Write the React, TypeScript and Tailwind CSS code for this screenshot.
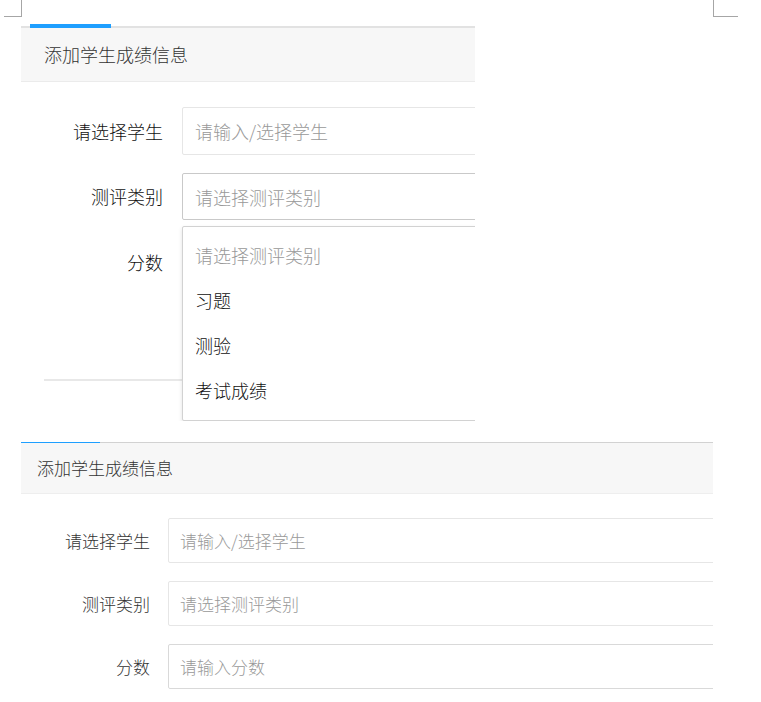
import React from "react";

const font = { fontFamily: '"Noto Sans CJK SC", "Noto Sans", sans-serif' };

const categories = ["习题", "测验", "考试成绩"];

function CornerMarks() {
  return (
    <div className="flex h-[17px]">
      <div className="ml-[4px] w-[18px] h-[17px] border-r border-b border-[#a6a6a6]" />
      <div className="ml-[691px] w-[25px] h-[17px] border-l border-b border-[#a6a6a6]" />
    </div>
  );
}

export default function App() {
  return (
    <div className="w-[761px] h-[702px] bg-white overflow-hidden font-light" style={font}>
      <CornerMarks />

      {/* first shot: select opened */}
      <div className="ml-[21px] mt-[7px] w-[454px] overflow-hidden">
        <div className="flex h-[4px]">
          <div className="w-[9px] border-b-2 border-[#e2e2e2]" />
          <div className="w-[81px] bg-[#1e9fff]" />
          <div className="flex-1 border-b-2 border-[#e2e2e2]" />
        </div>
        <div className="h-[54px] bg-[#f7f7f7] border-b border-[#ebebeb] flex items-center pl-[23px] text-[18px] text-[#333]">
          添加学生成绩信息
        </div>

        <div className="pt-[25px] flex flex-col gap-[18px]">
          <div className="flex items-center">
            <div className="w-[142px] shrink-0 text-right text-[18px] text-[#111]">请选择学生</div>
            <input
              readOnly
              placeholder="请输入/选择学生"
              className="ml-[19px] w-[320px] shrink-0 h-[48px] border border-[#e6e6e6] rounded-[2px] pl-[12px] text-[18px] outline-none placeholder:text-[#999]"
            />
          </div>
          <div className="flex items-center">
            <div className="w-[142px] shrink-0 text-right text-[18px] text-[#111]">测评类别</div>
            <div className="relative ml-[19px] w-[320px] shrink-0">
              <input
                readOnly
                placeholder="请选择测评类别"
                className="w-full h-[47px] border border-[#c9c9c9] rounded-[2px] pl-[12px] text-[18px] outline-none placeholder:text-[#999]"
              />
              <div className="absolute left-0 top-full mt-[6px] w-full z-10 bg-white border border-[#d2d2d2] rounded-[2px] shadow-[0_2px_4px_rgba(0,0,0,0.12)] pt-[6px] pb-[7px]">
                <div className="h-[45px] flex items-center pl-[12px] text-[18px] text-[#999]">请选择测评类别</div>
                {categories.map(c => (
                  <div key={c} className="h-[45px] flex items-center pl-[12px] text-[18px] text-[#111]">
                    {c}
                  </div>
                ))}
              </div>
            </div>
          </div>
          <div className="flex items-center">
            <div className="w-[142px] shrink-0 text-right text-[18px] text-[#111]">分数</div>
            <input
              readOnly
              placeholder="请输入分数"
              className="ml-[19px] w-[320px] shrink-0 h-[48px] border border-[#e6e6e6] rounded-[2px] pl-[12px] text-[18px] outline-none placeholder:text-[#999]"
            />
          </div>
        </div>

        <div className="ml-[23px] mt-[93px] h-[2px] bg-[#e8e8e8]" />
        <div className="h-[40px]" />
      </div>

      {/* second shot */}
      <div className="ml-[21px] mt-[21px] w-[692px] overflow-hidden">
        <div className="flex h-[1px]">
          <div className="w-[79px] bg-[#1e9fff]" />
          <div className="flex-1 bg-[#d2d2d2]" />
        </div>
        <div className="h-[51px] bg-[#f7f7f7] border-b border-[#eeeeee] flex items-center pl-[16px] text-[17px] text-[#333]">
          添加学生成绩信息
        </div>

        <div className="pt-[24px] flex flex-col gap-[18px]">
          {[
            ["请选择学生", "请输入/选择学生", "border-[#e6e6e6]"],
            ["测评类别", "请选择测评类别", "border-[#e6e6e6]"],
            ["分数", "请输入分数", "border-[#d9d9d9]"],
          ].map(([label, ph, border]) => (
            <div key={label} className="flex items-center">
              <div className="w-[129px] shrink-0 text-right text-[17px] text-[#333]">{label}</div>
              <input
                readOnly
                placeholder={ph}
                className={`ml-[18px] w-[560px] shrink-0 h-[45px] border ${border} rounded-[2px] pl-[11px] text-[17px] outline-none placeholder:text-[#999]`}
              />
            </div>
          ))}
        </div>
      </div>
    </div>
  );
}
